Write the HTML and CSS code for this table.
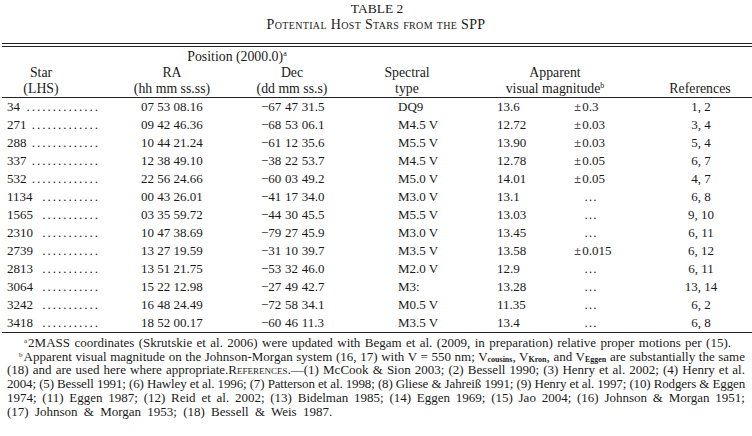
FILE: index.html
```html
<!DOCTYPE html>
<html>
<head>
<meta charset="utf-8">
<link rel="stylesheet" href="styles.css">
</head>
<body>
<div class="page">
  <div class="title">TABLE 2</div>
  <div class="subtitle">Potential Host Stars from the SPP</div>
  <div class="rule-double"></div>
  <div class="tbl">
    <div class="hc h-pos">Position (2000.0)<sup>a</sup></div>

    <div class="hc h-star r2">Star</div>
    <div class="hc h-ra r2">RA</div>
    <div class="hc h-dec r2">Dec</div>
    <div class="hc h-sp r2">Spectral</div>
    <div class="hc h-mag r2">Apparent</div>

    <div class="hc h-star r3">(LHS)</div>
    <div class="hc h-ra r3">(hh mm ss.ss)</div>
    <div class="hc h-dec r3">(dd mm ss.s)</div>
    <div class="hc h-sp r3">type</div>
    <div class="hc h-mag r3">visual magnitude<sup>b</sup></div>
    <div class="hc h-ref r3">References</div>

    <div class="rule"></div>

    <div class="c c-star"><span>34</span><span class="dots">..............</span></div><div class="c c-ra">07 53 08.16</div><div class="c c-dec">−67 47 31.5</div><div class="c c-sp">DQ9</div><div class="c c-mag">13.6</div><div class="c c-pm">±&#8202;0.3</div><div class="c c-ref">1, 2</div>
    <div class="c c-star"><span>271</span><span class="dots">.............</span></div><div class="c c-ra">09 42 46.36</div><div class="c c-dec">−68 53 06.1</div><div class="c c-sp">M4.5 V</div><div class="c c-mag">12.72</div><div class="c c-pm">±&#8202;0.03</div><div class="c c-ref">3, 4</div>
    <div class="c c-star"><span>288</span><span class="dots">.............</span></div><div class="c c-ra">10 44 21.24</div><div class="c c-dec">−61 12 35.6</div><div class="c c-sp">M5.5 V</div><div class="c c-mag">13.90</div><div class="c c-pm">±&#8202;0.03</div><div class="c c-ref">5, 4</div>
    <div class="c c-star"><span>337</span><span class="dots">.............</span></div><div class="c c-ra">12 38 49.10</div><div class="c c-dec">−38 22 53.7</div><div class="c c-sp">M4.5 V</div><div class="c c-mag">12.78</div><div class="c c-pm">±&#8202;0.05</div><div class="c c-ref">6, 7</div>
    <div class="c c-star"><span>532</span><span class="dots">.............</span></div><div class="c c-ra">22 56 24.66</div><div class="c c-dec">−60 03 49.2</div><div class="c c-sp">M5.0 V</div><div class="c c-mag">14.01</div><div class="c c-pm">±&#8202;0.05</div><div class="c c-ref">4, 7</div>
    <div class="c c-star"><span>1134</span><span class="dots">...........</span></div><div class="c c-ra">00 43 26.01</div><div class="c c-dec">−41 17 34.0</div><div class="c c-sp">M3.0 V</div><div class="c c-mag">13.1</div><div class="c c-pm ell">…</div><div class="c c-ref">6, 8</div>
    <div class="c c-star"><span>1565</span><span class="dots">...........</span></div><div class="c c-ra">03 35 59.72</div><div class="c c-dec">−44 30 45.5</div><div class="c c-sp">M5.5 V</div><div class="c c-mag">13.03</div><div class="c c-pm ell">…</div><div class="c c-ref">9, 10</div>
    <div class="c c-star"><span>2310</span><span class="dots">...........</span></div><div class="c c-ra">10 47 38.69</div><div class="c c-dec">−79 27 45.9</div><div class="c c-sp">M3.0 V</div><div class="c c-mag">13.45</div><div class="c c-pm ell">…</div><div class="c c-ref">6, 11</div>
    <div class="c c-star"><span>2739</span><span class="dots">...........</span></div><div class="c c-ra">13 27 19.59</div><div class="c c-dec">−31 10 39.7</div><div class="c c-sp">M3.5 V</div><div class="c c-mag">13.58</div><div class="c c-pm">±&#8202;0.015</div><div class="c c-ref">6, 12</div>
    <div class="c c-star"><span>2813</span><span class="dots">...........</span></div><div class="c c-ra">13 51 21.75</div><div class="c c-dec">−53 32 46.0</div><div class="c c-sp">M2.0 V</div><div class="c c-mag">12.9</div><div class="c c-pm ell">…</div><div class="c c-ref">6, 11</div>
    <div class="c c-star"><span>3064</span><span class="dots">...........</span></div><div class="c c-ra">15 22 12.98</div><div class="c c-dec">−27 49 42.7</div><div class="c c-sp">M3:</div><div class="c c-mag">13.28</div><div class="c c-pm ell">…</div><div class="c c-ref">13, 14</div>
    <div class="c c-star"><span>3242</span><span class="dots">...........</span></div><div class="c c-ra">16 48 24.49</div><div class="c c-dec">−72 58 34.1</div><div class="c c-sp">M0.5 V</div><div class="c c-mag">11.35</div><div class="c c-pm ell">…</div><div class="c c-ref">6, 2</div>
    <div class="c c-star"><span>3418</span><span class="dots">...........</span></div><div class="c c-ra">18 52 00.17</div><div class="c c-dec">−60 46 11.3</div><div class="c c-sp">M3.5 V</div><div class="c c-mag">13.4</div><div class="c c-pm ell">…</div><div class="c c-ref">6, 8</div>

    <div class="rule rule-bottom"></div>
  </div>

  <div class="notes">
    <div class="jl note-a"><sup>a</sup>2MASS coordinates (Skrutskie et al. 2006) were updated with Begam et al. (2009, in preparation) relative proper motions per (15).</div>
    <div class="jl note-b"><sup>b</sup>Apparent visual magnitude on the Johnson-Morgan system (16, 17) with V = 550 nm; V<sub>cousins</sub>, V<sub>Kron</sub>, and V<sub>Eggen</sub> are substantially the same</div>
    <div class="jl">(18) and are used here where appropriate.<span class="sc">References</span>.—(1) McCook &amp; Sion 2003; (2) Bessell 1990; (3) Henry et al. 2002; (4) Henry et al.</div>
    <div class="jl tight">2004; (5) Bessell 1991; (6) Hawley et al. 1996; (7) Patterson et al. 1998; (8) Gliese &amp; Jahreiß 1991; (9) Henry et al. 1997; (10) Rodgers &amp; Eggen</div>
    <div class="jl">1974; (11) Eggen 1987; (12) Reid et al. 2002; (13) Bidelman 1985; (14) Eggen 1969; (15) Jao 2004; (16) Johnson &amp; Morgan 1951;</div>
    <div class="last">(17) Johnson &amp; Morgan 1953; (18) Bessell &amp; Weis 1987.</div>
  </div>
</div>
</body>
</html>
```

FILE: styles.css
```css
html, body {
  margin: 0;
  padding: 0;
  background: #ffffff;
}

body {
  font-family: "Liberation Serif", "Times New Roman", serif;
  font-size: 13px;
  color: #1a1a1a;
}

.page {
  width: 752px;
  height: 436px;
  overflow: hidden;
}

.title {
  text-align: center;
  line-height: 16px;
  padding-top: 1px;
  padding-left: 2px;
  font-size: 13.5px;
}

.subtitle {
  text-align: center;
  line-height: 16px;
  font-size: 14px;
  letter-spacing: 0.35px;
  font-variant: small-caps;
}

.rule-double {
  margin: 10px 0 0 2px;
  height: 2px;
  border-top: 1px solid #222;
  border-bottom: 1px solid #222;
}

.tbl {
  display: grid;
  grid-template-columns: 120px 120px 130px 100px 90px 80px 112px;
  margin-top: 1px;
}

.hc {
  line-height: 16px;
  text-align: center;
  white-space: nowrap;
  font-size: 13.8px;
}

.h-pos {
  grid-column: 2 / 4;
  padding-right: 16px;
  line-height: 17px;
}

.r2 { grid-row: 2; }
.r3 { grid-row: 3; }

.h-star { grid-column: 1; padding-right: 38px; }
.h-ra { grid-column: 2; padding-right: 16px; }
.h-dec { grid-column: 3; padding-right: 26px; }
.h-sp { grid-column: 4; padding-right: 26px; }
.h-mag { grid-column: 5 / 7; padding-right: 0; }
.h-ref { grid-column: 7; padding-left: 8px; }

sup {
  font-size: 8px;
  line-height: 0;
  vertical-align: 5px;
}

.rule {
  grid-column: 1 / -1;
  margin-left: 2px;
  border-top: 1px solid #222;
}

.c {
  line-height: 18px;
  white-space: nowrap;
}

.c-star {
  display: flex;
  padding-left: 7px;
  padding-right: 20px;
}

.dots {
  margin-left: auto;
  letter-spacing: 2px;
}

.c-ra { padding-left: 21px; }
.c-dec { padding-left: 21px; word-spacing: 0.5px; }
.c-sp { padding-left: 28px; }
.c-mag { padding-left: 27px; }
.c-pm { padding-left: 14px; }
.c-pm.ell { padding-left: 24px; }
.c-ref { text-align: center; padding-left: 10px; }

.notes {
  padding: 3px 7px 0 7px;
  line-height: 13.7px;
}

.notes > div {
  white-space: nowrap;
}

.note-a {
  padding-left: 17px;
  padding-right: 14px;
}

.note-b {
  padding-left: 12px;
}

.jl {
  text-align: justify;
  text-align-last: justify;
}

.tight {
  letter-spacing: -0.14px;
}

.last {
  word-spacing: 3px;
}

.notes sup {
  font-size: 7px;
  vertical-align: 4px;
  margin-right: 1px;
}

.notes sub {
  font-size: 8px;
  font-weight: bold;
  line-height: 0;
  vertical-align: -1px;
}

.sc {
  font-variant: small-caps;
}
```
